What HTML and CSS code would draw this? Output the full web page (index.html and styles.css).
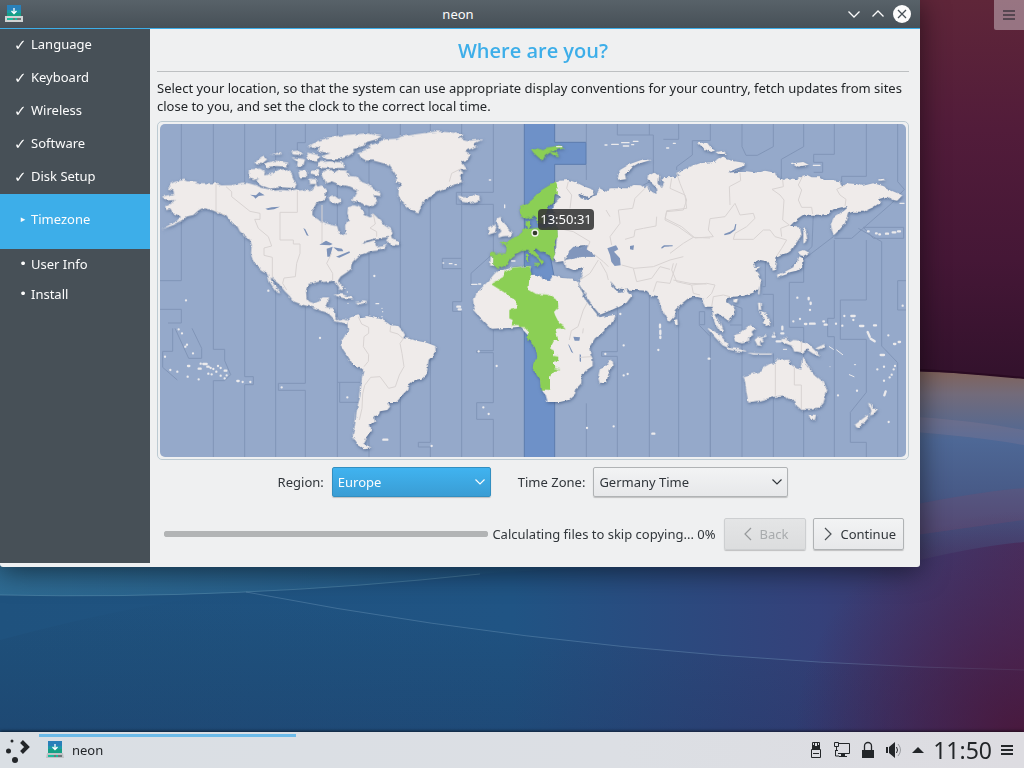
FILE: index.html
```html
<!DOCTYPE html>
<html lang="en">
<head>
<meta charset="utf-8">
<meta name="viewport" content="width=device-width, initial-scale=1">
<title>neon</title>
<link rel="stylesheet" href="styles.css">
</head>
<body>
<svg class="wallpaper" viewBox="0 0 1024 768" preserveAspectRatio="none" aria-hidden="true">
  <defs>
    <linearGradient id="plum" x1="0" y1="0" x2="0" y2="370" gradientUnits="userSpaceOnUse"><stop offset="0" stop-color="#5f2639"/><stop offset=".35" stop-color="#521c3a"/><stop offset=".7" stop-color="#451736"/><stop offset="1" stop-color="#34122d"/></linearGradient>
    <linearGradient id="shore" x1="0" y1="370" x2="0" y2="570" gradientUnits="userSpaceOnUse"><stop offset="0" stop-color="#806259"/><stop offset=".12" stop-color="#736b7a"/><stop offset=".35" stop-color="#4e6896"/><stop offset=".6" stop-color="#485b88"/><stop offset="1" stop-color="#433a68"/></linearGradient>
    <linearGradient id="deep" x1="0" y1="0" x2="1" y2="0"><stop offset="0" stop-color="#1f527e"/><stop offset=".5" stop-color="#205484"/><stop offset=".8" stop-color="#35417a"/><stop offset="1" stop-color="#48305f"/></linearGradient>
    <linearGradient id="haze" x1="0" y1="0" x2="1" y2="0"><stop offset="0" stop-color="#3b7fa3"/><stop offset=".55" stop-color="#245a88"/><stop offset="1" stop-color="#4d4070"/></linearGradient>
    <linearGradient id="fall" x1="0" y1="0" x2="0" y2="1"><stop offset="0" stop-color="#123" stop-opacity="0"/><stop offset="1" stop-color="#1c2350" stop-opacity=".25"/></linearGradient>
    <radialGradient id="dusk" cx="1024" cy="740" r="230" gradientUnits="userSpaceOnUse"><stop offset="0" stop-color="#4a1639" stop-opacity=".9"/><stop offset="1" stop-color="#4a1a4a" stop-opacity="0"/></radialGradient>
  </defs>
  <rect width="1024" height="768" fill="url(#plum)"/>
  <path d="M880 371Q950 371 1024 378V768H880Z" fill="url(#shore)"/>
  <path d="M900 369Q950 371 1024 378" fill="none" stroke="#2a0b22" stroke-width="2"/>
  <path d="M880 415Q960 418 1024 430V445Q960 434 880 430Z" fill="#9c7e94" opacity=".22"/>
  <path d="M880 512Q960 494 1024 488V520L880 540Z" fill="#874a68" opacity=".22"/>
  <path d="M0 560H920Q980 546 1024 542V768H0Z" fill="url(#deep)"/>
  <path d="M0 560H920V566Q650 560 480 574 240 600 0 595Z" fill="url(#haze)" opacity=".55"/>
  <path d="M0 595Q240 600 480 574" fill="none" stroke="#6ea3bd" opacity=".4"/>
  <path d="M246 592Q610 662 1024 670V768H0V640Q150 600 246 592Z" fill="url(#fall)"/>
  <path d="M246 592Q610 662 1024 670" fill="none" stroke="#7aa2c2" opacity=".35"/>
  <rect x="780" y="500" width="244" height="268" fill="url(#dusk)"/>
</svg>

<div class="desktop">
  <main class="workspace">
    <section class="window" aria-label="neon">
      <header class="titlebar">
        <svg class="app-icon" viewBox="0 0 18 18" aria-hidden="true"><rect x="2" width="14" height="12" fill="#1d99a9"/><path d="M2 0h14v5H2z" fill="#2980b9"/><path d="M2 8h14v4H2z" fill="#16a085"/><path d="M9 3v5M6.500 6 9 8.500 11.500 6" fill="none" stroke="#fff" stroke-width="1.300"/><path d="M0 11h18v6H0z" fill="#d0d4d4"/><path d="M2 14h14" stroke="#707678" stroke-width="2"/><path d="M2 14h6M10 14h2" stroke="#1abc9c" stroke-width="2"/></svg>
        <h1 class="window-title">neon</h1>
        <div class="window-buttons">
          <button type="button" aria-label="Minimize"><svg viewBox="0 0 18 18"><path d="m3.500 6.500 5.500 5.500 5.500-5.500"/></svg></button>
          <button type="button" aria-label="Maximize"><svg viewBox="0 0 18 18"><path d="m3.500 11.500 5.500-5.500 5.500 5.500"/></svg></button>
          <button type="button" aria-label="Close"><svg viewBox="0 0 18 18"><circle cx="9" cy="9" r="9" fill="#fcfcfc"/><path class="cross" d="m5 5 8 8m0-8-8 8"/></svg></button>
        </div>
      </header>
      <div class="window-body">
        <nav class="steps" aria-label="Installation steps">
          <ul>
            <li class="done"><span class="mark">✓</span>Language</li>
            <li class="done"><span class="mark">✓</span>Keyboard</li>
            <li class="done"><span class="mark">✓</span>Wireless</li>
            <li class="done"><span class="mark">✓</span>Software</li>
            <li class="done"><span class="mark">✓</span>Disk Setup</li>
            <li class="current" aria-current="step"><span class="mark">▸</span>Timezone</li>
            <li><span class="mark">•</span>User Info</li>
            <li><span class="mark">•</span>Install</li>
          </ul>
        </nav>
        <div class="page">
          <h2 class="page-title">Where are you?</h2>
          <p class="intro">Select your location, so that the system can use appropriate display conventions for your country, fetch updates from sites close to you, and set the clock to the correct local time.</p>
          <div class="map-frame"><div class="map">
            <svg viewBox="30 12 2238 999" role="img" aria-label="World time zones">
              <defs>
                <filter id="coast" x="0" y="0" width="2300" height="1020" filterUnits="userSpaceOnUse" color-interpolation-filters="sRGB">
                  <feTurbulence type="fractalNoise" baseFrequency=".055" numOctaves="3" seed="4" result="n"/>
                  <feDisplacementMap in="SourceGraphic" in2="n" scale="11" xChannelSelector="R" yChannelSelector="G" result="land"/>
                  <feDropShadow in="land" dx="2" dy="4" stdDeviation="4" flood-color="#3c547c" flood-opacity=".65"/>
                </filter>
              </defs>
              <rect x="30" y="12" width="2238" height="999" fill="#95a9ca"/>
              <path fill="#6e91c8" stroke="#5d7cae" stroke-width="3" d="M1123 5V1020H1214V480L1190 350 1214 300V133H1308V67H1214V5Z"/>
              <g fill="none" stroke="#8195b7" stroke-width="3">
                <path d="M94 12V482H30M30 568H94V609H54M190 12V688H224V722L242 764 224 782H190V1011M284 12V770H310V794H284V1011M377 12V1011M466 12V68H442V110M466 540V790H385V811H466V1011M562 12V1011M657 12V1011M751 12V1011M841 12V967H805V981H841V1011M935 12V545H908V574H935V1011"/>
                <path d="M562 787H630M569 787V847H630M75 625 116 715H155V685L126 625M68 625V694H38V742L82 780"/>
                <path d="M1030 12V217H919V253H1030V400L963 460V498M935 415H877V446H935M1030 630V692H980V698H1030V848H980V898H1030V1011M1309 133V180M1309 850V1011M1402 560V695H1355V709H1402V1011M1498 520V1011"/>
                <path d="M1309 12V70M1402 12V45H1510V180L1480 195M1498 12V45M1586 12V58H1540M1681 12V62H1627V105L1580 140V150M1776 12V80L1788 106H1822L1870 80V12M1961 12V80L1894 118V178M2053 12V103H1991V127H2018V157H1991M2149 12V169H2075V190M2243 12V185L2263 208 2225 250 2105 355H2053M2140 322H2261V355H2170ZM2149 360V540H2071V658H2149V817L2101 877V967H2149V1011M2125 325 2195 365V678L2243 728V1011M2268 482H2243V570H2268"/>
                <path d="M1586 528V1011M1681 640V1011L1681 650 1648 616V575H1664V614H1650M1776 615V1011M1740 615H1776V565L1750 555M1870 700V1011M1846 350V500H1838M1838 523H1870V620M1961 400V487H1918V622H1961V1011M1990 280 1986 380 1920 445M2053 360V595H2033V650H2053V1011M1961 418 2050 350"/>
              </g>
              <g filter="url(#coast)">
                <g fill="#efebea">
                  <path d="M50 205 64 200 60 192 72 186 100 179 112 184 135 184 150 189 195 190 215 196 245 195 262 192 280 188 297 190 318 196 335 203 358 208 375 212 400 210 420 212 440 208 452 212 468 208 480 214 490 204 498 192 503 200 515 196 522 204 530 212 526 222 532 228 522 240 508 246 497 254 488 270 487 285 495 292 510 302 530 310 548 315 562 318 566 335 578 346 586 340 585 318 596 300 592 280 594 262 612 256 625 260 640 270 645 285 660 292 668 280 678 288 690 300 706 318 722 326 728 336 724 346 712 352 690 354 672 356 650 362 635 374 650 368 668 362 680 360 676 370 680 382 700 378 712 372 700 387 684 392 664 394 645 400 632 405 625 412 612 425 605 436 602 448 590 458 572 470 564 482 568 492 578 500 578 512 568 507 560 490 552 482 535 484 522 486 510 484 490 490 475 492 468 510 470 535 478 545 492 550 508 544 514 532 538 532 530 548 526 562 552 564 556 578 556 595 565 602 580 598 596 602 592 612 575 608 556 604 540 588 530 578 510 572 490 562 478 560 455 554 430 544 420 530 405 515 388 494 372 480 362 472 365 484 376 498 392 520 382 518 368 500 358 485 352 460 335 450 320 438 308 420 303 400 305 375 300 360 288 350 270 335 262 320 248 312 240 300 228 285 215 280 200 276 185 270 170 266 155 266 145 272 130 285 110 290 100 300 70 315 34 328 60 314 85 302 92 290 80 284 68 280 60 268 48 270 45 262 64 250 74 240 50 242 36 230 52 226 72 222 70 212Z"/>
                  <path d="M300 148 330 146 345 155 342 172 310 180 298 172ZM345 165 370 160 385 150 405 148 425 158 430 178 440 190 435 205 395 202 360 206 330 195 318 182ZM312 128 340 110 352 118 335 132ZM345 130 375 122 415 128 410 140 378 138 350 142ZM362 104 390 96 392 104ZM420 94 445 92 460 106 430 104ZM425 112 465 118 460 138 438 138 440 124ZM445 152 470 150 472 172 448 172ZM485 152 508 150 505 168 482 160ZM478 176 498 178 500 192 480 192ZM468 98 500 104 512 112 500 122 475 118ZM505 126 540 124 580 128 584 144 520 144 500 138Z"/>
                  <path d="M474 80 500 64 545 50 600 44 650 40 695 48 680 58 650 66 640 78 610 84 612 96 595 108 570 118 530 118 515 108 540 100 505 94 510 82Z"/>
                  <path d="M516 160 528 150 545 150 552 160 570 150 592 152 600 168 620 170 628 182 650 190 668 206 692 220 690 228 670 226 682 242 668 262 650 256 630 248 605 242 615 224 622 210 600 200 578 196 560 190 545 184 528 190ZM536 232 555 228 575 244 560 252 540 244Z"/>
                  <path d="M708 362 722 342 726 358 745 364 746 376 725 374ZM550 524 575 522 600 530 612 538 590 538 565 530ZM615 546 640 544 652 548 630 552Z"/>
                  <path transform="translate(540)" d="M86 100 110 92 100 88 125 82 110 80 145 68 165 58 200 56 215 50 260 42 320 34 370 38 400 46 385 54 420 62 458 58 430 72 440 78 425 86 405 95 420 105 412 120 395 125 405 140 412 148 385 150 400 160 390 170 400 185 380 192 350 204 330 212 300 228 290 240 278 248 266 278 250 272 232 262 215 245 205 225 206 205 215 190 200 185 195 160 180 140 160 130 130 122 108 122 92 112Z"/>
                  <path transform="translate(540)" d="M385 226 405 232 430 224 448 230 450 240 425 250 400 246 388 236ZM500 296 512 290 516 304 532 322 546 340 542 348 518 349 506 353 505 343 514 334 503 315ZM474 325 490 315 499 320 495 338 475 344ZM482 408 492 412 490 438 480 436Z"/>
                  <path transform="translate(0 480)" d="M594 122 605 112 628 105 630 112 650 108 690 116 712 128 722 136 745 138 758 152 765 165 760 175 775 176 800 182 830 188 856 198 857 212 850 225 836 240 833 262 828 285 815 296 795 300 775 315 772 330 760 342 740 366 714 366 720 380 712 390 690 394 686 404 672 408 675 425 660 436 664 450 655 462 645 480 640 490 655 498 668 502 640 505 625 495 615 480 608 465 614 440 618 410 622 380 630 350 635 300 640 270 630 262 608 252 595 232 580 210 572 195 575 182 584 168 594 150 592 132Z"/>
                  <path transform="translate(870 420)" d="M146 62 160 45 175 30 192 30 220 22 272 18 268 45 290 44 300 48 305 58 330 60 340 45 365 54 400 56 412 65 425 95 440 125 465 155 478 172 524 164 520 178 490 215 465 235 448 262 452 285 458 300 458 318 440 330 425 345 424 370 410 385 405 402 385 420 360 426 322 426 316 405 305 390 300 350 300 280 268 230 240 200 205 204 152 206 135 190 118 172 100 150 104 135 102 118 110 100 130 78ZM512 298 518 312 505 345 498 368 480 373 474 352 480 325 500 315ZM700 180 712 178 714 194 704 196Z"/>
                  <path transform="translate(1530)" d="M-315 190-300 182-275 180-250 188-225 200-198 210-200 225-215 232-232 225-245 220-238 235-220 240-205 232-190 225-182 205-160 215-150 205-120 205-95 205-80 195-58 196-45 205-38 196-32 212-10 222-14 200-25 190-38 180-36 168-18 158-2 165-4 190 5 205 12 190 2 178 12 170 30 172 45 175 60 168 50 158 90 140 120 130 165 125 185 112 215 122 252 128 250 140 205 158 260 154 295 158 315 152 345 158 350 170 368 180 380 175 410 178 425 168 440 164 455 172 480 172 492 180 515 180 540 184 545 198 560 190 590 192 605 198 640 190 670 198 695 212 727 226 712 242 698 240 680 230 655 238 660 248 640 262 610 275 580 275 565 280 558 300 555 310 540 328 522 346 515 330 512 312 520 295 540 280 565 258 545 262 520 268 505 282 480 284 460 284 430 284 410 298 388 320 405 322 420 322 425 345 415 360 395 390 382 400 365 402 350 410 348 425 345 445 350 450 335 452 330 430 320 424 300 420 282 428 285 440 302 440 285 450 298 466 302 490 295 505 280 518 250 528 220 530 203 535 200 545 225 565 222 585 205 602 190 592 172 580 167 585 178 605 190 635 180 632 165 610 158 585 155 560 138 560 125 535 105 530 85 535 60 555 45 570 42 590 28 606 15 585 0 558-5 532-25 528-40 512-80 510-105 508-130 505-150 482-138 505-125 518-112 518-104 505-85 528-100 548-140 568-180 584-200 560-220 530-245 490-236 470-230 445-260 450-285 440-290 420-260 416-235 410-190 410-210 395-235 388-222 375-250 378-266 386-278 412-288 420-315 424-320 415-312 390-308 330-320 270-318 252-300 232-315 222Z"/>
                  <path transform="translate(1530)" d="M-130 170-120 150-90 132-50 118-28 120-60 130-85 145-105 160-102 178-120 180ZM115 70 140 66 152 82 165 92 150 96 130 84ZM170 96 190 92 200 102 178 102ZM398 130 430 126 446 134 415 140ZM655 178 675 176 676 181 656 182ZM430 325 436 322 442 358 430 375ZM418 395 432 390 448 398 430 408 420 406ZM418 412 428 418 424 444 410 452 392 456 362 466 356 474 354 464 375 455 400 442ZM298 484 302 486 298 526 294 520ZM294 548 302 548 304 572 296 572ZM300 575 318 582 328 596 330 614 318 618 308 608 316 600ZM222 538 234 536 230 548 220 546Z"/>
                  <path transform="translate(1530 420)" d="M140 202 155 208 180 225 202 250 204 264 188 256 165 232ZM202 263 225 265 258 272 258 278 225 273 203 268ZM222 225 240 220 262 200 275 194 286 206 275 215 280 225 268 232 268 246 245 250 228 244ZM288 235 318 225 320 230 300 234 312 244 306 248 300 244 302 258 292 256 284 240ZM262 278 300 280 335 280 330 284 280 284ZM362 234 380 234 390 246 400 240 425 243 450 256 468 274 482 286 460 282 440 268 428 278 402 274 396 258 370 248ZM468 264 494 252 492 262 475 268ZM340 215 345 218 342 235ZM252 350 275 342 300 335 310 322 335 308 345 312 355 298 392 296 388 310 410 325 424 328 430 292 440 310 452 330 465 345 490 365 502 390 490 430 475 445 455 450 425 450 410 438 405 420 385 420 370 406 345 410 300 422 265 428 260 400ZM446 464 468 464 465 480 452 480ZM624 428 632 432 638 446 654 446 640 464 630 466 634 452ZM582 496 608 476 624 464 628 470 602 500 588 504Z"/>
                </g>
                <g fill="#8bcf55">
                  <path transform="translate(540)" d="M568 262 590 252 610 236 635 210 660 195 678 188 682 200 684 226 674 224 672 244 655 260 650 275 650 300 640 310 622 310 615 286 605 292 590 296 572 290ZM586 308 600 300 600 314 592 326ZM508 366 528 368 525 373 545 356 560 350 575 338 585 324 600 326 625 323 682 325 684 350 676 360 672 380 675 405 668 422 655 405 645 395 632 396 618 385 610 392 625 408 642 425 635 434 625 417 605 404 595 390 580 390 565 398 555 402 552 408 540 416 530 435 505 446 490 438 490 410 480 408 480 398 500 400 528 400 530 385ZM588 404 594 402 594 424 588 424ZM612 432 630 432 628 438 614 436Z"/>
                  <path transform="translate(540)" d="M602 86 618 84 640 90 655 82 690 76 705 84 680 90 658 94 680 98 688 108 670 106 660 98 645 108 638 122 625 112 610 98Z"/>
                  <path transform="translate(870 420)" d="M152 72 195 48 192 38 220 22 272 18 270 30 275 42 268 55 265 90 285 102 325 104 354 122 355 142 342 155 345 165 358 190 378 204 346 206 350 220 355 242 342 242 330 265 342 272 342 288 355 290 354 302 342 304 342 324 362 328 340 334 330 350 330 390 302 388 300 360 290 345 278 325 280 310 292 290 285 262 270 245 262 238 265 215 256 205 240 204 235 195 215 196 218 180 208 175 208 150 228 145 230 125 205 105Z"/>
                </g>
              </g>
              <g fill="#7c92b9">
                <path d="M300 224 318 226 328 216 344 226 326 228 316 236 312 230ZM346 266 365 262 390 260 372 268 354 270ZM460 324 466 328 476 348 470 346ZM508 374 528 362 548 372 540 376ZM530 386 548 380 540 410 532 410ZM550 382 576 386 580 394 564 394ZM558 410 598 394 600 398 568 413Z"/>
                <path fill="#8196bc" transform="translate(1080)" d="M292 385 318 376 325 388 312 395 330 415 332 436 314 438 304 425 300 405ZM172 410 178 392 190 380 204 380 212 388 222 378 236 376 230 388 244 398 256 410 210 410 184 418Z"/>
                <path transform="translate(1080)" d="M360 378 372 376 370 390 360 388ZM454 382 462 376 488 376 488 379 464 380 455 386Z"/>
                <path d="M1722 342 1740 335 1752 328 1756 312 1759 312 1756 330 1740 342 1724 346ZM1270 650 1290 652 1288 662 1274 662ZM1254 672 1264 696 1270 700 1258 676ZM1289 703 1293 704 1293 726 1289 724ZM1735 158 1758 146 1782 138 1780 143 1758 152Z"/>
              </g>
              <g fill="none" stroke="#d8d3d2" stroke-width="3" stroke-linejoin="round">
                <path d="M198 192V274L226 286M228 200 245 215V230L270 250 300 274 330 280V298H314L325 325 355 350 365 378 342 384 342 406 367 412V472M442 212V277H390V360H430V372H450V400L440 430 436 470 402 474 398 490 410 510M516 255V370M545 400 530 430 548 460V482M670 282 676 312 660 324 680 335V350"/>
                <path d="M625 590 635 612 656 622V640L642 650 640 680 656 704 655 724 642 740M722 618 720 635 744 642 760 656 750 670 756 700 762 740 748 765 736 800 716 805 690 770 662 772 644 796 638 822 636 865 628 900"/>
                <path d="M898 185 905 160 935 145"/>
                <path transform="translate(1080)" d="M175 185 170 205 185 225 180 265M100 285 180 275M145 325 190 335 240 365 232 385M405 205 375 235 368 265 325 270 330 310 300 350 305 375M288 270 300 290M440 290 438 318 400 325 375 330 372 350 345 358M485 175 480 205 525 225 530 265 470 272 465 300 505 320 550 352 600 354M255 405 280 425 295 440M335 435 372 445 430 440 480 420 520 410M370 445 380 485 425 475 450 440M430 515 440 485 480 490 500 430M490 480 540 490 590 492M265 420 240 460 210 480M270 425 290 460 295 480M550 352 520 370 480 400"/>
                <path transform="translate(1530)" d="M50 160 60 190 80 240 70 270 20 275 15 295 65 320 105 354 160 350 145 330 150 296 195 290 210 270 225 250 240 285 280 280 285 295 260 320 225 340 220 358 280 358 310 330 330 330 345 350 380 360 365 385 350 408M240 158 242 182 208 200 210 255M368 180 370 200 336 208 360 225 372 240 368 300 388 315 362 325 365 350M428 168 415 195 425 210 415 240 425 262 455 262 458 282M555 196 530 208 540 225 558 238 555 258M40 430 35 450 50 485 95 495 140 490 165 495 155 520 140 535M95 495 100 520 120 525M155 560 160 530 190 525 210 530M0 440 30 448"/>
                <path d="M1876 733V827M1933 743V795H1954V868M1954 664V696M1312 548 1300 570 1284 620 1264 632 1258 660M1300 625 1298 640M1290 712 1325 710"/>
              </g>
              <g fill="none" stroke="#ebeaec" stroke-width="7" stroke-linecap="round">
                <path d="M86 628h0M96 640h0M111 674h0M106 680h0M129 700h0M45 710h0M61 750h0M82 755h0M114 738h4M113 770h0M146 746h6M146 778h0M152 731h0M160 732h10M172 740h4M182 744h0M190 747h0M199 755h0M204 738h0M212 767h0M212 744h0M224 752h5M230 766h0M175 761h0M185 763h0M224 775h0M262 783h4M278 786h0M301 786h0M395 802h0M592 832h0M355 512h0M108 541h0M510 654h0M700 959h12M673 468h0M845 978h0M922 560h8M926 568h6"/>
                <path stroke-width="4" d="M696 565v0M698 575v0M696 590v0M678 551h8M594 550h0M585 505h0M592 516h0M879 429h2M898 431h8M915 434h4M1018 180h4M1064 255v8M965 493h16M986 492h6M1085 423h10M1220 80h15"/>
                <path d="M986 694h0M1040 738h0M1000 862h0M1016 882h0M1311 924h0M1391 919h0M1507 941h6M1525 690h0M1366 702h0M1421 766h0M1433 762h0M1411 582h0M1421 676h0M1530 614v8M1531 632v10M1531 650v4M1676 716h2"/>
                <path stroke-width="4" d="M1365 75h6M1385 73h20M1415 68h22M1450 64h14M1420 78h16M1445 74h6M1550 84h6M1570 70h6M1925 130h4M1990 136h20M2250 250h12"/>
                <path d="M1942 533h0M1976 534v4M1982 548v4M1980 570h0M1897 620v8M1930 604h0M1950 597h0M1965 612h4M1980 611h14M2020 604h2M2024 614h6M2058 611h0M2077 617h0M2083 588h0M2104 588h10M2110 600h0M2130 618h10M2172 616h6M2153 636l6 14M2162 656l12 8M2215 646h0M2232 672h4M2246 666h4M2154 334h2M2178 340h2M2188 343h2M2208 341h6M2228 337h8M2244 334h6M2192 705h10M2235 738h0M2182 748h0M2202 740h0M2231 748h0M2225 764h0M2219 772h0M2202 782h0M2207 814l-4 12M2121 812h0M2064 826h0M2216 906h0M1894 640h6M1868 650h6M1880 664h12M2258 557h0"/>
                <path stroke-width="3" d="M2038 680l12 8M2060 690l18 14M2098 764l14 6M2113 734h4M2040 740h0M1818 660l20-6M1900 688h10"/>
              </g>
              <circle cx="1155" cy="339" r="9" fill="#333b2c" stroke="#f2f4ec" stroke-width="4"/>
            </svg>
            <span class="map-time">13:50:31</span>
          </div></div>
          <form class="location">
            <label for="region">Region:</label>
            <span class="combo combo-active"><select id="region"><option>Europe</option></select><svg viewBox="0 0 10 6" aria-hidden="true"><path d="m.5.5 4.500 4.500 4.500-4.500"/></svg></span>
            <label class="zone-label" for="zone">Time Zone:</label>
            <span class="combo combo-wide"><select id="zone"><option>Germany Time</option></select><svg viewBox="0 0 10 6" aria-hidden="true"><path d="m.5.5 4.500 4.500 4.500-4.500"/></svg></span>
          </form>
          <div class="actions">
            <progress id="copy" max="100" value="0"></progress>
            <label for="copy">Calculating files to skip copying... 0%</label>
            <button class="push back" type="button" disabled><svg viewBox="0 0 8 14" aria-hidden="true"><path d="M7 1 1 7l6 6"/></svg>Back</button>
            <button class="push" type="button"><svg viewBox="0 0 8 14" aria-hidden="true"><path d="m1 1 6 6-6 6"/></svg>Continue</button>
          </div>
        </div>
      </div>
    </section>
    <button class="toolbox" type="button" aria-label="Desktop toolbox"><svg viewBox="0 0 12 10"><path d="M0 1h12M0 5h12M0 9h12"/></svg></button>
  </main>

  <footer class="panel">
    <button class="launcher" type="button" aria-label="Application launcher"><svg viewBox="0 0 26 26"><g fill="#232629"><circle cx="7" cy="4" r="1.500"/><circle cx="3.500" cy="14" r="2.500"/><circle cx="10" cy="23" r="3"/></g><path d="m16.500 4.500 5.500 5.500-5.500 5.500" fill="none" stroke="#232629" stroke-width="4"/></svg></button>
    <button class="task" type="button">
      <svg class="app-icon" viewBox="0 0 18 18" aria-hidden="true"><rect x="2" width="14" height="12" fill="#1d99a9"/><path d="M2 0h14v5H2z" fill="#2980b9"/><path d="M2 8h14v4H2z" fill="#16a085"/><path d="M9 3v5M6.500 6 9 8.500 11.500 6" fill="none" stroke="#fff" stroke-width="1.300"/><path d="M1 12h16l1 5H0z" fill="#bfc3c6"/><path d="M2 15h14" stroke="#707678" stroke-width="2"/><path d="M2 15h6M10 15h2" stroke="#1abc9c" stroke-width="2"/></svg>
      neon
    </button>
    <div class="tray">
      <svg viewBox="0 0 16 18" aria-label="USB device"><path fill="none" stroke="#232629" d="M4.500 8V1.500h7V8M3.500 8.500h9v8h-9z"/><path fill="#232629" d="M4 4h2V2h1v3h2V2h1v2h2v4H4zM5 12h6v1H5z"/></svg>
      <svg class="wide" viewBox="0 0 18 18" aria-label="Wired network"><path fill="none" stroke="#232629" d="M6 2.500h10.500v10H5M1.500 1.500h4v4h-4zM3.500 6v3M2 9.500h3M2.500 9v6H6"/><path fill="#232629" d="M8 13h4v2h2v1H6v-1h2z"/></svg>
      <svg viewBox="0 0 16 18" aria-label="Lock"><path d="M4.500 9V5a3.500 3.500 0 0 1 7 0v4" fill="none" stroke="#232629" stroke-width="1.300"/><path d="M2 9h12v8H2z" fill="#232629"/></svg>
      <svg class="wide" viewBox="0 0 18 18" aria-label="Volume"><path d="M1 6h2v6H1zM4 6l6-5v16l-6-5z" fill="#232629"/><path d="M11.500 6q2 3 0 6" fill="none" stroke="#232629"/><path d="M13 3q5 6 0 12" fill="none" stroke="#999ba0"/></svg>
      <svg class="expand" viewBox="0 0 12 6" aria-label="Show hidden icons"><path d="m0 6 6-6 6 6z" fill="#232629"/></svg>
      <time>11:50</time>
      <svg class="menu" viewBox="0 0 12 10" aria-label="Panel menu"><path d="M0 1h12M0 5h12M0 9h12" stroke="#232629" stroke-width="2"/></svg>
    </div>
  </footer>
</div>
</body>
</html>
```

FILE: styles.css
```css
* { box-sizing: border-box; }

body {
  margin: 0;
  background: #20406c;
  color: #31363b;
  font: 13px/18px "Noto Sans", "Open Sans", sans-serif;
}

button, select { font: inherit; color: inherit; }
button { border: 0; padding: 0; background: none; }
svg { display: block; }

.wallpaper {
  position: fixed;
  inset: 0;
  width: 100%;
  height: 100%;
  z-index: -1;
}

.desktop { display: flex; flex-direction: column; min-height: 100vh; }

.workspace {
  display: flex;
  flex: 1;
  align-items: flex-start;
  gap: 74px;
}

.window {
  flex: 1;
  min-width: 0;
  background: #eff0f1;
  border-radius: 0 0 3px 3px;
  box-shadow: 0 4px 28px rgba(0, 0, 0, .55);
}

.titlebar {
  display: flex;
  align-items: center;
  height: 29px;
  padding: 0 9px 0 5px;
  border-bottom: 1px solid #3daee9;
  background: linear-gradient(#586269, #475057);
  color: #fcfcfc;
}

.app-icon { width: 18px; height: 18px; }

.window-title {
  flex: 1;
  margin: 0 0 0 48px;
  font-size: 13px;
  font-weight: 400;
  text-align: center;
}

.window-buttons { display: flex; gap: 6px; }
.window-buttons svg { width: 18px; height: 18px; }
.window-buttons path { fill: none; stroke: #fcfcfc; stroke-width: 1.3; }
.window-buttons .cross { stroke: #475057; }

.window-body { display: flex; padding-bottom: 4px; }

.steps { flex: 0 0 150px; background: #475057; color: #fcfcfc; }
.steps ul { margin: 0; padding: 0; list-style: none; }
.steps li { display: flex; align-items: center; height: 30px; padding-left: 15px; }
.steps .done { height: 33px; padding-bottom: 4px; }
.steps .current { height: 55px; padding-bottom: 6px; background: #3daee9; }
.mark { width: 16px; text-align: center; font-family: "DejaVu Sans", sans-serif; }
.done .mark { padding-top: 2px; font-size: 15px; text-align: left; text-indent: -1px; }
.current .mark { font-size: 9px; }

.page { flex: 1; min-width: 0; padding: 0 11px 0 7px; }

.page-title {
  margin: 0;
  height: 43px;
  border-bottom: 1px solid #bdc0c2;
  color: #3daee9;
  font-family: "Open Sans", "Noto Sans", sans-serif;
  font-size: 20px;
  font-weight: 600;
  line-height: 43px;
  text-align: center;
}

.intro { margin: 7px 0 6px; color: #232629; }

.map-frame { padding: 2px; border: 1px solid #bccad2; border-radius: 5px; }
.map { position: relative; }
.map > svg { width: 100%; border-radius: 5px; }

.map-time {
  position: absolute;
  left: 50.7%;
  top: 25.6%;
  padding: 1px 2px 2px;
  border-radius: 4px;
  background: rgba(52, 52, 52, .88);
  color: #fcfcfc;
}

.location {
  display: flex;
  justify-content: center;
  align-items: center;
  gap: 8px;
  margin-top: 7px;
}

.zone-label { margin-left: 19px; }

.combo { position: relative; width: 159px; }
.combo-wide { width: 195px; }

.combo select {
  display: block;
  width: 100%;
  height: 30px;
  padding: 0 5px;
  appearance: none;
  border: 1px solid #b0b3b5;
  border-radius: 2px;
  background: linear-gradient(#f2f3f4, #e7e8ea);
  box-shadow: 0 1px 1px rgba(0, 0, 0, .2);
}

.combo-active select {
  border-color: #328fc1;
  background: linear-gradient(#40b3f0, #3a9dd4);
  color: #fcfcfc;
}

.combo svg {
  position: absolute;
  right: 6px;
  top: 12px;
  width: 10px;
  height: 6px;
  fill: none;
  stroke: #31363b;
  stroke-width: 1.2;
  pointer-events: none;
}

.combo-active svg { stroke: #fcfcfc; }

.actions {
  display: flex;
  align-items: center;
  margin-top: 21px;
  padding: 0 5px 13px 7px;
}

.actions progress {
  flex: 1;
  width: 0;
  height: 6px;
  margin-right: 4px;
  appearance: none;
  border: 0;
  border-radius: 3px;
  background: #b2b4b5;
}

.actions progress::-webkit-progress-bar { border-radius: 3px; background: #b2b4b5; }
.actions progress::-webkit-progress-value { background: #3daee9; }

.push {
  display: flex;
  justify-content: center;
  align-items: center;
  gap: 8px;
  height: 32px;
  margin-left: 7px;
  padding: 0 7px 0 10px;
  border: 1px solid #b0b3b5;
  border-radius: 2px;
  background: linear-gradient(#f2f3f4, #e7e8ea);
  box-shadow: 0 1px 1px rgba(0, 0, 0, .2);
}

.push svg { width: 8px; height: 14px; fill: none; stroke: #4d5256; stroke-width: 1.2; }
.back {
  margin-left: 8px;
  padding: 0 17px 0 19px;
  border-color: #cdcfd1;
  background: linear-gradient(#e4e5e6, #dcddde);
  color: #a8abad;
}
.back svg { stroke: #96999b; }

.toolbox {
  display: grid;
  place-items: center;
  width: 30px;
  height: 30px;
  border-radius: 0 0 0 2px;
  background: rgba(190, 170, 180, .6);
}
.toolbox svg { width: 12px; height: 10px; stroke: #554650; stroke-width: 2; }

.panel {
  display: flex;
  align-items: stretch;
  height: 36px;
  background: linear-gradient(90deg, #dadfe4, #dcdfe4 60%, #dddce1);
  box-shadow: 0 -1px 3px rgba(0, 0, 0, .6);
  color: #232629;
}

.launcher { padding: 0 8px 0 5px; }
.launcher svg { width: 26px; height: 26px; }

.task {
  display: flex;
  align-items: center;
  gap: 8px;
  width: 257px;
  margin-top: 2px;
  padding: 0 7px 5px;
  border-top: 3px solid #6cbbe9;
}

.tray { display: flex; align-items: center; margin-left: auto; padding-right: 11px; gap: 9px; }
.tray svg { width: 16px; height: 18px; }
.tray .wide { width: 18px; }
.tray time { font-size: 23px; line-height: 30px; }
.tray .expand { width: 12px; height: 6px; }
.tray .menu { width: 12px; height: 10px; }
```
